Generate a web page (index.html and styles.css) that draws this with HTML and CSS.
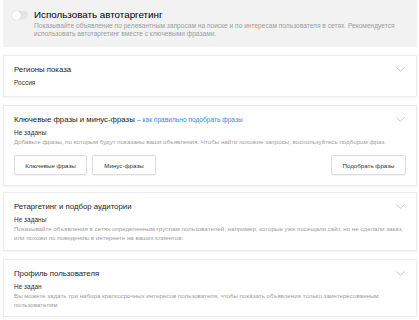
FILE: index.html
```html
<!DOCTYPE html>
<html lang="ru">
<head>
    <meta charset="UTF-8">
    <title>Таргетинг</title>
    <link rel="stylesheet" href="styles.css">
</head>
<body>
<div class="page">
    <div class="autotarget">
        <span class="toggle"><span class="toggle-knob"></span></span>
        <div class="autotarget-text">
            <div class="autotarget-title">Использовать автотаргетинг</div>
            <div class="hint">Показывайте объявление по релевантным запросам на поиске и по интересам пользователя в сетях. Рекомендуется использовать автотаргетинг вместе с ключевыми фразами.</div>
        </div>
    </div>

    <div class="card card-regions">
        <div class="card-head">
            <div class="card-title">Регионы показа</div>
            <svg class="chevron" width="9" height="5" viewBox="0 0 9 5"><polyline points="0.5,0.5 4.5,4.3 8.5,0.5" fill="none" stroke="#c8c8c8" stroke-width="1"/></svg>
        </div>
        <div class="value">Россия</div>
    </div>

    <div class="card card-phrases">
        <div class="card-head">
            <div class="card-title">Ключевые фразы и минус-фразы <a class="help-link" href="#">– как правильно подобрать фразы</a></div>
            <svg class="chevron" width="9" height="5" viewBox="0 0 9 5"><polyline points="0.5,0.5 4.5,4.3 8.5,0.5" fill="none" stroke="#c8c8c8" stroke-width="1"/></svg>
        </div>
        <div class="value">Не заданы</div>
        <div class="hint">Добавьте фразы, по которым будут показаны ваши объявления. Чтобы найти похожие запросы, воспользуйтесь подбором фраз.</div>
        <div class="buttons">
            <button class="btn btn-keys">Ключевые фразы</button>
            <button class="btn btn-minus">Минус-фразы</button>
            <button class="btn btn-pick">Подобрать фразы</button>
        </div>
    </div>

    <div class="card card-retarget">
        <div class="card-head">
            <div class="card-title">Ретаргетинг и подбор аудитории</div>
            <svg class="chevron" width="9" height="5" viewBox="0 0 9 5"><polyline points="0.5,0.5 4.5,4.3 8.5,0.5" fill="none" stroke="#c8c8c8" stroke-width="1"/></svg>
        </div>
        <div class="value">Не заданы</div>
        <div class="hint">Показывайте объявления в сетях определенным группам пользователей, например, которые уже посещали сайт, но не сделали заказ, или похожи по поведению в интернете на ваших клиентов.</div>
    </div>

    <div class="card card-profile">
        <div class="card-head">
            <div class="card-title">Профиль пользователя</div>
            <svg class="chevron" width="9" height="5" viewBox="0 0 9 5"><polyline points="0.5,0.5 4.5,4.3 8.5,0.5" fill="none" stroke="#c8c8c8" stroke-width="1"/></svg>
        </div>
        <div class="value">Не задан</div>
        <div class="hint">Вы можете задать три набора краткосрочных интересов пользователя, чтобы показать объявления только заинтересованным пользователям</div>
    </div>
</div>
</body>
</html>
```

FILE: styles.css
```css
body {
    margin: 0;
    background: #fff;
    font-family: "Liberation Sans", Arial, sans-serif;
    color: #222;
}
.page {
    padding: 0 2px 0 3px;
}

.autotarget {
    display: flex;
    align-items: flex-start;
    background-color: #f2f2f2;
    height: 47px;
    box-sizing: border-box;
    padding: 9px 10px 0 9px;
}
.toggle {
    position: relative;
    flex: none;
    width: 16px;
    height: 8px;
    margin-top: 2px;
    margin-right: 6px;
    border-radius: 4px;
    background-color: #e4e4e4;
}
.toggle-knob {
    position: absolute;
    left: 0;
    top: -0.5px;
    width: 9px;
    height: 9px;
    border-radius: 50%;
    background-color: #fff;
    box-shadow: 0 0 1px rgba(0, 0, 0, .25);
}
.autotarget-title {
    font-size: 9.8px;
    line-height: 12px;
    color: #000;
}
.autotarget .hint {
    margin-top: 1px;
    font-size: 6.6px;
    line-height: 8px;
}

.hint {
    font-size: 6.2px;
    line-height: 9px;
    color: #9d9d9d;
}

.card {
    margin-top: 8px;
    border: 1px solid #ececec;
    box-shadow: 0 1px 2px rgba(0, 0, 0, .06);
    background-color: #fff;
    padding: 8px 10px 7.5px 10px;
}
.card-head {
    display: flex;
    justify-content: space-between;
    align-items: center;
}
.card-title {
    font-size: 7.8px;
    line-height: 11px;
    color: #1a1a1a;
}
.chevron {
    margin-right: 1px;
}
.help-link {
    font-size: 6.6px;
    color: #3a8ad3;
    text-decoration: none;
}
.value {
    margin-top: 3px;
    font-size: 6.5px;
    line-height: 9px;
    color: #333;
}

.card-regions {
    padding-bottom: 9px;
}
.buttons {
    display: flex;
    gap: 5px;
    margin-top: 9px;
}
.btn {
    height: 20px;
    padding: 0;
    border: 1px solid #dedede;
    border-radius: 2px;
    background-color: #fff;
    box-shadow: 0 1px 1px rgba(0, 0, 0, .05);
    font-family: inherit;
    font-size: 6.2px;
    color: #333;
}
.btn-keys {
    width: 73px;
}
.btn-minus {
    width: 64px;
}
.btn-pick {
    width: 75px;
    margin-left: auto;
}
.card-phrases {
    padding-bottom: 10px;
}
.card-retarget {
    margin-top: 6px;
}
```
